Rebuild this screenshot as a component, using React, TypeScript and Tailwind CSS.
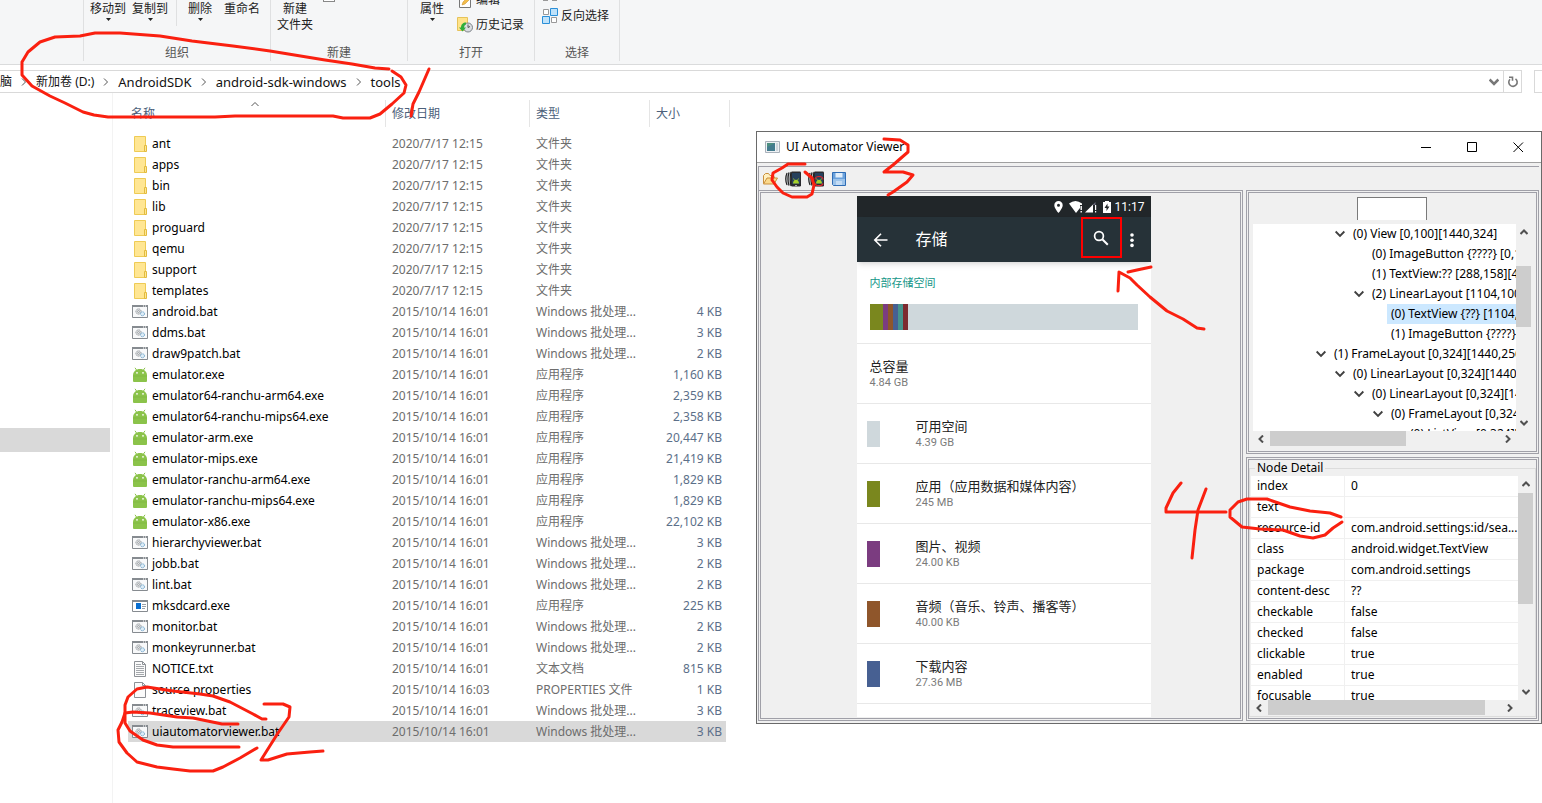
import type { ReactNode } from "react";

type FileKind = "folder" | "bat" | "android" | "exe" | "txt" | "file";

interface FileRow {
  name: string;
  date: string;
  type: string;
  size: string;
  kind: FileKind;
}

const folder = (name: string): FileRow => ({
  name,
  date: "2020/7/17 12:15",
  type: "文件夹",
  size: "",
  kind: "folder",
});

const bat = (name: string, size: string): FileRow => ({
  name,
  date: "2015/10/14 16:01",
  type: "Windows 批处理...",
  size,
  kind: "bat",
});

const exe = (name: string, size: string, kind: FileKind = "android"): FileRow => ({
  name,
  date: "2015/10/14 16:01",
  type: "应用程序",
  size,
  kind,
});

const files: FileRow[] = [
  folder("ant"),
  folder("apps"),
  folder("bin"),
  folder("lib"),
  folder("proguard"),
  folder("qemu"),
  folder("support"),
  folder("templates"),
  bat("android.bat", "4 KB"),
  bat("ddms.bat", "3 KB"),
  bat("draw9patch.bat", "2 KB"),
  exe("emulator.exe", "1,160 KB"),
  exe("emulator64-ranchu-arm64.exe", "2,359 KB"),
  exe("emulator64-ranchu-mips64.exe", "2,358 KB"),
  exe("emulator-arm.exe", "20,447 KB"),
  exe("emulator-mips.exe", "21,419 KB"),
  exe("emulator-ranchu-arm64.exe", "1,829 KB"),
  exe("emulator-ranchu-mips64.exe", "1,829 KB"),
  exe("emulator-x86.exe", "22,102 KB"),
  bat("hierarchyviewer.bat", "3 KB"),
  bat("jobb.bat", "2 KB"),
  bat("lint.bat", "2 KB"),
  exe("mksdcard.exe", "225 KB", "exe"),
  bat("monitor.bat", "2 KB"),
  bat("monkeyrunner.bat", "2 KB"),
  { name: "NOTICE.txt", date: "2015/10/14 16:01", type: "文本文档", size: "815 KB", kind: "txt" },
  { name: "source.properties", date: "2015/10/14 16:03", type: "PROPERTIES 文件", size: "1 KB", kind: "file" },
  bat("traceview.bat", "3 KB"),
  bat("uiautomatorviewer.bat", "3 KB"),
];

const selectedFile = "uiautomatorviewer.bat";

interface TreeNode {
  label: string;
  indent: string;
  open?: boolean;
  selected?: boolean;
}

const tree: TreeNode[] = [
  { label: "(0) View [0,100][1440,324]", indent: "pl-[78px]", open: true },
  { label: "(0) ImageButton {????} [0,100][224,324]", indent: "pl-[97px]" },
  { label: "(1) TextView:?? [288,158][448,266]", indent: "pl-[97px]" },
  { label: "(2) LinearLayout [1104,100][1440,324]", indent: "pl-[97px]", open: true },
  { label: "(0) TextView {??} [1104,128][1296,296]", indent: "pl-[116px]", selected: true },
  { label: "(1) ImageButton {????} [1296,128][1440,296]", indent: "pl-[116px]" },
  { label: "(1) FrameLayout [0,324][1440,2560]", indent: "pl-[59px]", open: true },
  { label: "(0) LinearLayout [0,324][1440,2560]", indent: "pl-[78px]", open: true },
  { label: "(0) LinearLayout [0,324][1440,2560]", indent: "pl-[97px]", open: true },
  { label: "(0) FrameLayout [0,324][1440,2560]", indent: "pl-[116px]", open: true },
  { label: "(0) ListView [0,324][1440,2560]", indent: "pl-[135px]" },
];

const details: [string, string][] = [
  ["index", "0"],
  ["text", ""],
  ["resource-id", "com.android.settings:id/sea..."],
  ["class", "android.widget.TextView"],
  ["package", "com.android.settings"],
  ["content-desc", "??"],
  ["checkable", "false"],
  ["checked", "false"],
  ["clickable", "true"],
  ["enabled", "true"],
  ["focusable", "true"],
];

const storage = [
  { name: "可用空间", size: "4.39 GB", color: "bg-[#cfd8dc]" },
  { name: "应用（应用数据和媒体内容）", size: "245 MB", color: "bg-[#7a871e]" },
  { name: "图片、视频", size: "24.00 KB", color: "bg-[#7b3c80]" },
  { name: "音频（音乐、铃声、播客等）", size: "40.00 KB", color: "bg-[#8f562b]" },
  { name: "下载内容", size: "27.36 MB", color: "bg-[#476092]" },
];

function FileIcon({ kind }: { kind: FileKind }) {
  return (
    <svg className="size-4 shrink-0" viewBox="0 0 16 16" fill="none">
      {kind === "folder" && (
        <>
          <path d="M2.5.5h11v15h-11z" fill="#ffe693" stroke="#eecb55" />
          <path d="M12.5 9.5h2v6h-2z" fill="#ffe693" stroke="#e2bb3e" />
        </>
      )}
      {kind === "bat" && (
        <>
          <path d="M.5 1.5h15v12H.5z" fill="#f8f9fa" stroke="#868b90" />
          <path d="M0 1h16v2H0z" fill="#868b90" />
          <path d="M11 2h1M13 2h1" stroke="#fff" />
          <circle cx="6.5" cy="7.5" r="2.6" fill="#e4e6e8" stroke="#8c9196" strokeDasharray="1.2 .6" />
          <circle cx="6.5" cy="7.5" r="1" stroke="#8c9196" strokeWidth=".7" />
          <circle cx="10.5" cy="9.8" r="2" fill="#dcecf7" stroke="#6fa5cb" strokeDasharray="1.2 .5" />
        </>
      )}
      {kind === "android" && (
        <>
          <path d="M3 .8l1.8 2.600M13 .8l-1.800 2.600" stroke="#8bc34a" />
          <path d="M1 8.500C1 4.500 4 2 8 2s7 2.500 7 6.500V14q0 1-1 1H2q-1 0-1-1z" fill="#8bc34a" />
          <path d="M1 9h14" stroke="#7fb640" strokeWidth=".7" />
          <circle cx="5" cy="5.800" r=".9" fill="#fff" />
          <circle cx="11" cy="5.800" r=".9" fill="#fff" />
        </>
      )}
      {kind === "exe" && (
        <>
          <path d="M.5 2.5h15v11H.5z" fill="#fff" stroke="#868b90" />
          <path d="M0 2h16v2H0z" fill="#868b90" />
          <path d="M4 5h5v6H4z" fill="#0a6fd0" />
          <path d="M10 6.500h4M10 8.500h4M10 10.500h3" stroke="#9aa0a6" />
        </>
      )}
      {(kind === "txt" || kind === "file") && (
        <path d="M2.500.5h8l3 3v12h-11zM10.500.5v3h3" fill="#fbfbfb" stroke="#8d9196" />
      )}
      {kind === "txt" && <path d="M4 3.500h5M4 5.500h8M4 7.500h8M4 9.500h8M4 11.500h8M4 13.500h8" stroke="#a4a8ac" />}
    </svg>
  );
}

function Chevron({ className }: { className: string }) {
  return (
    <svg className={className} viewBox="0 0 8 8" fill="none" stroke="currentColor">
      <path d="M0.500 2L4 5.500L7.500 2" />
    </svg>
  );
}

function DropArrow() {
  return (
    <svg className="mt-px h-[3px] w-[5px]" viewBox="0 0 5 3">
      <path d="M0 0h5L2.500 3z" fill="#222" />
    </svg>
  );
}

function RibbonGroup({ title, className, children }: { title: string; className: string; children?: ReactNode }) {
  return (
    <section className={`flex h-[61px] flex-col border-r border-[#dfe0e1] ${className}`}>
      <div className="flex h-[45px] overflow-hidden">{children}</div>
      <span className="text-center leading-4 text-[#555]">{title}</span>
    </section>
  );
}

function RibbonButton({ label, drop, className = "" }: { label: string; drop?: boolean; className?: string }) {
  return (
    <button className={`mt-px flex flex-col items-center self-start whitespace-pre leading-4 ${className}`}>
      {label}
      {drop && <DropArrow />}
    </button>
  );
}

function Ribbon() {
  return (
    <header className="flex h-[65px] overflow-hidden border-b border-[#dadbdc] bg-[#f5f6f7] text-[#222]">
      <RibbonGroup title="" className="w-[84px]" />
      <RibbonGroup title="组织" className="w-[187px]">
        <RibbonButton label="移动到" drop className="ml-1.5" />
        <RibbonButton label="复制到" drop className="ml-1.5" />
        <span className="ml-2 h-[26px] border-r border-[#dfe0e1]" />
        <RibbonButton label="删除" drop className="ml-[11px]" />
        <RibbonButton label="重命名" className="ml-3" />
      </RibbonGroup>
      <RibbonGroup title="新建" className="w-[137px]">
        <RibbonButton label={"新建\n文件夹"} className="ml-1.5" />
        <span className="ml-2.5 h-0.5 w-3 border-x border-b border-[#888] bg-white" />
      </RibbonGroup>
      <RibbonGroup title="打开" className="w-[127px]">
        <RibbonButton label="属性" drop className="ml-3" />
        <div className="-mt-2 ml-[13px] flex flex-col">
          <button className="flex h-[25px] items-start gap-[3px] leading-4">
            <svg className="size-4" viewBox="0 0 16 16" fill="none">
              <path d="M2.500 2.500h11v13h-11z" fill="#fff" stroke="#777" />
              <path d="M5 13l1-3 8-8 2 2-8 8z" fill="#f4bd49" stroke="#c48a27" strokeWidth=".5" />
            </svg>
            编辑
          </button>
          <button className="flex h-4 items-center gap-[3px] leading-4">
            <svg className="size-4" viewBox="0 0 16 16" fill="none">
              <path d="M.5.500h10v13H.5z" fill="#ffe38a" stroke="#e6c35a" />
              <circle cx="11" cy="10.500" r="4.500" fill="#d9dde0" stroke="#7d8388" />
              <path d="M11 7.500v3l2-1" stroke="#555" />
              <path d="M9 5.500c-3 0-5 2-5 5H2l3.500 4L9 10.500H7c0-2 1-3 2-3z" fill="#2fae3b" />
            </svg>
            历史记录
          </button>
        </div>
      </RibbonGroup>
      <RibbonGroup title="选择" className="w-[85px]">
        <div className="ml-[7px] flex flex-col gap-1.5">
          <svg className="h-0.5 w-4" viewBox="0 0 16 2">
            <path d="M1 0h5v1H1zM10 0h5v1h-5z" fill="#999" />
          </svg>
          <button className="flex items-center gap-[3px] leading-4">
            <svg className="size-4" viewBox="0 0 16 16" fill="none">
              <path d="M1.500 1.500h5v5h-5zM9.500 9.500h5v5h-5z" fill="#fff" stroke="#999" />
              <path d="M8.500.500h7v7h-7zM.5 8.500h7v7H.5z" fill="#bfe2fa" stroke="#2a8fd8" />
            </svg>
            反向选择
          </button>
        </div>
      </RibbonGroup>
    </header>
  );
}

function AddressBar() {
  const crumbs = ["脑", "新加卷 (D:)", "AndroidSDK", "android-sdk-windows", "tools"];
  return (
    <nav className="flex gap-3 pt-[5px]">
      <div className="flex h-[23px] flex-1 items-center border-y border-r border-[#d9d9d9] text-[#111]">
        {crumbs.map((crumb, i) => (
          <span key={crumb} className="flex items-center">
            {i > 0 && <Chevron className="mx-2 size-2 -rotate-90 text-[#555]" />}
            <a href="#" className={i > 1 ? "text-[13px]" : ""}>
              {crumb}
            </a>
          </span>
        ))}
        <button aria-label="历史" className="ml-auto px-1">
          <Chevron className="size-2.5 stroke-2 text-[#777]" />
        </button>
        <button aria-label="刷新" className="flex h-full w-[18px] items-center justify-center border-l border-[#d9d9d9]">
          <svg className="size-3" viewBox="0 0 12 12" fill="none" stroke="#777" strokeWidth="1.600">
            <path d="M8.500 2.800A4.200 4.200 0 1 1 3 3.200M2 1.200h3.500v3.500" />
          </svg>
        </button>
      </div>
      <div className="h-[23px] w-2 border-y border-l border-[#d9d9d9]" />
    </nav>
  );
}

function FileTable() {
  const head = "h-[27px] border-r border-[#e5e5e5] py-0 pr-0 text-left font-normal";
  return (
    <table className="mt-[7px] ml-[15px] w-[602px] table-fixed border-separate border-spacing-0 self-start text-[#6d6d6d]">
      <colgroup>
        <col className="w-[258px]" />
        <col className="w-36" />
        <col className="w-[120px]" />
        <col className="w-[76px]" />
        <col className="w-1" />
      </colgroup>
      <thead className="text-[#4c607a]">
        <tr>
          <th className={`${head} relative pl-[3px]`}>
            名称
            <Chevron className="absolute top-0 left-[123px] size-2 rotate-180 text-[#555]" />
          </th>
          <th className={`${head} pl-1.5`}>修改日期</th>
          <th className={`${head} pl-1.5`}>类型</th>
          <th className="py-0 pl-1.5 text-left font-normal">大小</th>
          <th className="border-r border-[#e5e5e5] p-0" />
        </tr>
      </thead>
      <tbody>
        <tr className="h-1.5">
          <td colSpan={5} className="p-0" />
        </tr>
        {files.map((file) => (
          <tr key={file.name} className={`h-[21px] ${file.name === selectedFile ? "bg-[#d9d9d9]" : ""}`}>
            <td className="p-0">
              <div className="flex h-[21px] items-center gap-1 pl-1 text-black">
                <FileIcon kind={file.kind} />
                {file.name}
              </div>
            </td>
            <td className="px-1.5 py-0">{file.date}</td>
            <td className="py-0 pl-1.5 whitespace-nowrap">{file.type}</td>
            <td className="px-1 py-0 text-right text-[#5c6f89]">{file.size}</td>
            <td className="bg-white p-0" />
          </tr>
        ))}
      </tbody>
    </table>
  );
}

function PhoneScreen() {
  return (
    <div className="h-[521px] w-[294px] overflow-hidden bg-white font-['Roboto','Noto_Sans_CJK_SC',sans-serif]">
      <div className="flex h-[21px] items-center justify-end gap-1 bg-[#212629] pr-1.5 text-white">
        <svg className="h-3 w-[9px]" viewBox="0 0 9 12" fill="#fff">
          <path fillRule="evenodd" d="M4.500 0A4.200 4.200 0 0 0 .3 4.200C.3 7.300 4.500 12 4.500 12s4.200-4.700 4.200-7.800A4.200 4.200 0 0 0 4.500 0zm0 2.700a1.500 1.500 0 1 1 0 3 1.500 1.500 0 0 1 0-3z" />
        </svg>
        <svg className="ml-0.5 h-3 w-7" viewBox="0 0 28 12" fill="#fff">
          <path d="M0 2.500Q6.500-2.500 13 2.500V4h-2v3L7 12z" />
          <path d="M11.500 5h1.400v4h-1.400zM11.500 10h1.400v1.400h-1.400z" />
          <path d="M16 11.500l8-8v8z" />
          <path d="M24 3.500l2.500-2.500v3H24z" fill="#667" />
          <path d="M26 4h1.200v5H26zM26 10h1.200v1.400H26z" />
        </svg>
        <svg className="ml-0.5 h-3 w-2" viewBox="0 0 8 12">
          <path d="M2 0h4v1h2v11H0V1h2z" fill="#fff" />
          <path d="M4.500 2.500L1.500 7h2v3l3-4.500h-2z" fill="#212629" />
        </svg>
        <span className="text-[12px] leading-3">11:17</span>
      </div>
      <div className="flex h-[45px] items-center bg-[#263238] pl-4 text-white shadow-md">
        <svg className="size-4" viewBox="0 0 16 16" fill="none" stroke="#fff" strokeWidth="1.600">
          <path d="M14.500 8H2M8 1.800L1.800 8L8 14.200" />
        </svg>
        <span className="ml-[27px] text-base">存储</span>
        <button aria-label="搜索" className="mb-1 ml-auto flex size-[41px] items-center justify-center border-2 border-[#f00]">
          <svg className="size-4" viewBox="0 0 16 16" fill="none" stroke="#fff" strokeWidth="1.700">
            <circle cx="6" cy="6" r="4.400" />
            <path d="M9.300 9.300l5.500 5.500" strokeWidth="2" />
          </svg>
        </button>
        <button aria-label="更多" className="mr-[17px] ml-2 w-1">
          <svg className="h-4 w-1" viewBox="0 0 4 16" fill="#fff">
            <circle cx="2" cy="3" r="1.800" />
            <circle cx="2" cy="8.200" r="1.800" />
            <circle cx="2" cy="13.400" r="1.800" />
          </svg>
        </button>
      </div>
      <div className="h-[82px] border-b border-[#e8e8e8] px-[13px] pt-3">
        <h2 className="text-[11px] leading-5 text-[#149688]">内部存储空间</h2>
        <div className="mt-2.5 flex h-[26px] bg-[#cfd8dc]">
          <span className="w-[13px] bg-[#7a871e]" />
          <span className="w-[5px] bg-[#7b3c80]" />
          <span className="w-[5px] bg-[#8f562b]" />
          <span className="w-[5px] bg-[#476092]" />
          <span className="w-[5px] bg-[#46938c]" />
          <span className="w-[5px] bg-[#7d2b30]" />
        </div>
      </div>
      <div className="flex h-[60px] flex-col justify-center border-b border-[#e8e8e8] px-[13px] pt-0.5">
        <span className="text-[13px] leading-4 text-[#222]">总容量</span>
        <span className="text-[11px] leading-4 text-[#7b7b7b]">4.84 GB</span>
      </div>
      {storage.map((item) => (
        <div key={item.name} className="flex h-[60px] items-center border-b border-[#e8e8e8] pl-2.5">
          <span className={`h-[26px] w-[13px] ${item.color}`} />
          <div className="ml-9 flex flex-col pt-0.5">
            <span className="text-[13px] leading-4 text-[#222]">{item.name}</span>
            <span className="text-[11px] leading-4 text-[#7b7b7b]">{item.size}</span>
          </div>
        </div>
      ))}
    </div>
  );
}

function VerticalBar({ before, thumb }: { before: string; thumb: string }) {
  return (
    <div className="flex w-[15px] flex-col items-center bg-[#f0f0f0] py-1 text-[#505050]">
      <Chevron className="size-2 rotate-180 stroke-2" />
      <div className={`w-full bg-[#cdcdcd] ${before} ${thumb}`} />
      <Chevron className="mt-auto size-2 stroke-2" />
    </div>
  );
}

function HorizontalBar({ thumb }: { thumb: string }) {
  return (
    <div className="flex h-[15px] items-center bg-[#f0f0f0] px-1 text-[#505050]">
      <Chevron className="size-2 rotate-90 stroke-2" />
      <div className={`ml-[5px] h-full bg-[#cdcdcd] ${thumb}`} />
      <Chevron className="ml-auto size-2 -rotate-90 stroke-2" />
    </div>
  );
}

function NodeTree() {
  return (
    <div className="h-[264px] border-3 border-double border-[#a0a0a8] pt-1 pr-[5px] pl-1">
      <input
        aria-label="Search"
        className="mx-auto block h-[23px] w-[70px] border border-b-0 border-[#7a7a7a] bg-white"
      />
      <div className="mt-1 flex h-[207px]">
        <ul role="tree" className="min-w-0 flex-1 overflow-hidden bg-white text-black">
          {tree.map((node, i) => (
            <li
              key={i}
              role="treeitem"
              aria-selected={!!node.selected}
              className={`flex h-5 items-center whitespace-nowrap ${node.indent}`}
            >
              <span className="w-[18px] shrink-0 pl-1">
                {node.open && <Chevron className="size-2.5 stroke-[1.500] text-[#404040]" />}
              </span>
              <span className={`h-5 px-1 leading-5 ${node.selected ? "bg-[#cce8ff]" : ""}`}>{node.label}</span>
            </li>
          ))}
        </ul>
        <VerticalBar before="mt-[30px]" thumb="h-[61px]" />
      </div>
      <div className="pr-[15px]">
        <HorizontalBar thumb="w-[136px]" />
      </div>
    </div>
  );
}

function NodeDetail() {
  return (
    <div className="mt-[3px] h-[264px] border-3 border-double border-[#a0a0a8]">
      <fieldset className="h-[257px] border border-[#dcdcdc] pr-0.5 pl-px">
        <legend className="ml-1 h-4 px-0.5 leading-4 text-black">Node Detail</legend>
        <div className="flex h-[224px] overflow-hidden">
          <div className="min-w-0 flex-1 overflow-hidden bg-white">
            <table className="w-full table-fixed border-separate border-spacing-0 text-black">
              <tbody>
                {details.map(([key, value]) => (
                  <tr key={key} className="h-[21px]">
                    <th className="w-[94px] border-r border-b border-[#f0f0f0] py-0 pl-1.5 text-left font-normal">
                      {key}
                    </th>
                    <td className="truncate border-b border-[#f0f0f0] py-0 pl-1.5">{value}</td>
                  </tr>
                ))}
              </tbody>
            </table>
          </div>
          <VerticalBar before="mt-[5px]" thumb="h-[111px]" />
        </div>
        <div className="pr-[15px]">
          <HorizontalBar thumb="w-[217px]" />
        </div>
      </fieldset>
    </div>
  );
}

function DeviceIcon({ compressed }: { compressed?: boolean }) {
  return (
    <svg className="size-4" viewBox="0 0 16 16" fill="none">
      <path d="M2.500 1.500h4v13h-4Q-1.500 8 2.500 1.500z" fill="#c9ccd0" />
      <path d="M2 2Q-.5 8 2 14M4 1.500Q2 8 4 14.500M6 1Q4.500 8 6 15" stroke="#222" strokeWidth="1.200" />
      <rect x="6" y=".5" width="10" height="15" rx="1.200" fill="#2a2a2e" />
      <path d="M7 2h8v11H7z" fill="#26405c" />
      <path d="M8 12.500c0-2.500 1.300-3.800 3-3.800s3 1.300 3 3.800z" fill="#a6d129" />
      <path d="M8.500 7.500l1 1.800M13.500 7.500l-1 1.800" stroke="#a6d129" strokeWidth=".8" />
      <path d="M10 14.500h2" stroke="#aaa" />
      {compressed && <path d="M7 8.500c0-4 8-4 8 0M7 12.500c1 3 7 3 8 0" stroke="#e0232b" strokeWidth="1.200" />}
    </svg>
  );
}

function AutomatorWindow() {
  return (
    <div className="absolute top-[131px] right-0 left-[756px] border border-[#6a6a6a] bg-[#f0f0f0]">
      <div className="flex h-[30px] items-center bg-white pl-2 text-black">
        <svg className="h-3 w-[15px]" viewBox="0 0 15 12" fill="none">
          <path d="M.5.500h14v11H.5z" fill="#eef1f4" stroke="#a9b1ba" />
          <path d="M2 2h8v8H2z" fill="#4d8f80" />
          <path d="M2 6l8-4v8H2z" fill="#3f6f98" opacity=".6" />
          <path d="M11 2h2v8h-2z" fill="#cfd6dc" />
        </svg>
        <span className="ml-1.5">UI Automator Viewer</span>
        <div className="ml-auto flex">
          <button aria-label="Minimize" className="flex h-[30px] w-[46px] items-center justify-center">
            <svg className="size-[11px]" viewBox="0 0 11 11">
              <path d="M0 5h10v1H0z" />
            </svg>
          </button>
          <button aria-label="Maximize" className="flex h-[30px] w-[46px] items-center justify-center">
            <svg className="size-[11px]" viewBox="0 0 11 11" fill="none" stroke="#000">
              <path d="M.5.500h9v9h-9z" />
            </svg>
          </button>
          <button aria-label="Close" className="flex h-[30px] w-[46px] items-center justify-center">
            <svg className="size-[11px]" viewBox="0 0 11 11" stroke="#000">
              <path d="M.5.500l9.500 9.500M10 .5l-9.500 9.500" />
            </svg>
          </button>
        </div>
      </div>
      <div className="border-t border-[#a0a0a0] pt-[3px] pr-0.5 pl-px">
        <div className="flex h-6 items-center gap-[7px] border-t border-l border-[#a0a0a8] pl-[3px]">
          <button aria-label="Open">
            <svg className="size-4" viewBox="0 0 16 16" fill="none">
              <path d="M1.500 12.500v-8l2-2h3l1.500 2h3.500l1.500 3" fill="#fff0c0" stroke="#c98f3c" />
              <path d="M1.500 13l3.500-6h10.500L12 13z" fill="#fbd98c" stroke="#c98f3c" />
            </svg>
          </button>
          <button aria-label="Device Screenshot">
            <DeviceIcon />
          </button>
          <button aria-label="Device Screenshot with Compressed Hierarchy">
            <DeviceIcon compressed />
          </button>
          <button aria-label="Save">
            <svg className="size-4" viewBox="0 0 16 16" fill="none">
              <path d="M1.500 1.500h13v13h-12l-1-1z" fill="#6aa1dc" stroke="#2f6db5" />
              <path d="M2 8h12v6H2z" fill="#9cc3ea" />
              <path d="M4.500 2h7v4.500h-7z" fill="#e2effb" />
              <path d="M5 10h6v4H5z" fill="#c4dcf4" />
            </svg>
          </button>
        </div>
        <div className="flex gap-[3px] pb-0.5">
          <div className="flex h-[531px] min-w-0 flex-1 justify-center border-3 border-double border-[#a0a0a8] pt-[3px] pl-1.5">
            <PhoneScreen />
          </div>
          <div className="w-[293px]">
            <NodeTree />
            <NodeDetail />
          </div>
        </div>
      </div>
    </div>
  );
}

// Hand-drawn red marks over the windows
const strokes = [
  "M389 69L375 68L352 64L325 60L270 51L233 46L192 41L160 36L120 33L95 33L80 36L55 37L40 42L28 52L22 62L22 75L32 86L50 96L65 103L83 112L94 115L108 117L215 117L235 116L333 116L343 118L370 118L380 114L392 104L404 93L406 85L401 77L392 71",
  "M429 69L419 92L413 104L411 116",
  "M266 719L262 719L253 714L230 702L213 696L200 694L173 691L160 689L147 687L137 689L128 697L125 705L125 723L130 731L143 740L157 745L173 747L239 747",
  "M238 724L222 724L193 718L177 717L150 713L133 712L125 713L122 722L118 730L119 742L127 753L137 762L157 767L173 769L190 771L213 771L223 767L240 758L257 748",
  "M264 704L283 704L290 707L289 717L278 733L261 760L268 760L287 754L310 752L323 751",
  "M805 164L788 164L782 168L773 173L772 180L777 187L783 193L792 197L807 197L812 194L814 185L812 178L805 172",
  "M884 139L900 140L908 145L908 152L893 165L884 172L903 172L913 175L907 182L893 192L888 195",
  "M1204 329L1197 328L1183 319L1167 311L1150 297L1137 285L1130 278L1119 272L1118 291",
  "M1128 272L1137 270L1151 267",
  "M1181 483L1173 493L1166 508L1166 512L1226 512",
  "M1206 489L1198 510L1195 530L1192 558",
  "M1341 517L1330 513L1310 511L1290 507L1267 499L1247 499L1238 502L1230 510L1230 517L1242 527L1260 529L1283 530L1300 536L1313 538L1325 535L1333 528L1342 522",
];

function Annotations() {
  return (
    <svg
      className="pointer-events-none absolute top-0 left-0 h-[803px] w-[1542px]"
      viewBox="0 0 1542 803"
      fill="none"
      stroke="#fa2010"
      strokeWidth="3"
      strokeLinecap="round"
      strokeLinejoin="round"
    >
      {strokes.map((d) => (
        <path key={d} d={d} />
      ))}
    </svg>
  );
}

export default function App() {
  return (
    <div className="relative flex min-h-screen flex-col overflow-hidden bg-white font-['Noto_Sans','Noto_Sans_CJK_SC',sans-serif] text-[12px] leading-4">
      <Ribbon />
      <AddressBar />
      <main className="flex flex-1">
        <aside className="w-[113px] border-r border-[#f3f3f3] pt-[335px] pr-0.5">
          <div className="h-6 bg-[#d9d9d9]" />
        </aside>
        <FileTable />
      </main>
      <AutomatorWindow />
      <Annotations />
    </div>
  );
}
